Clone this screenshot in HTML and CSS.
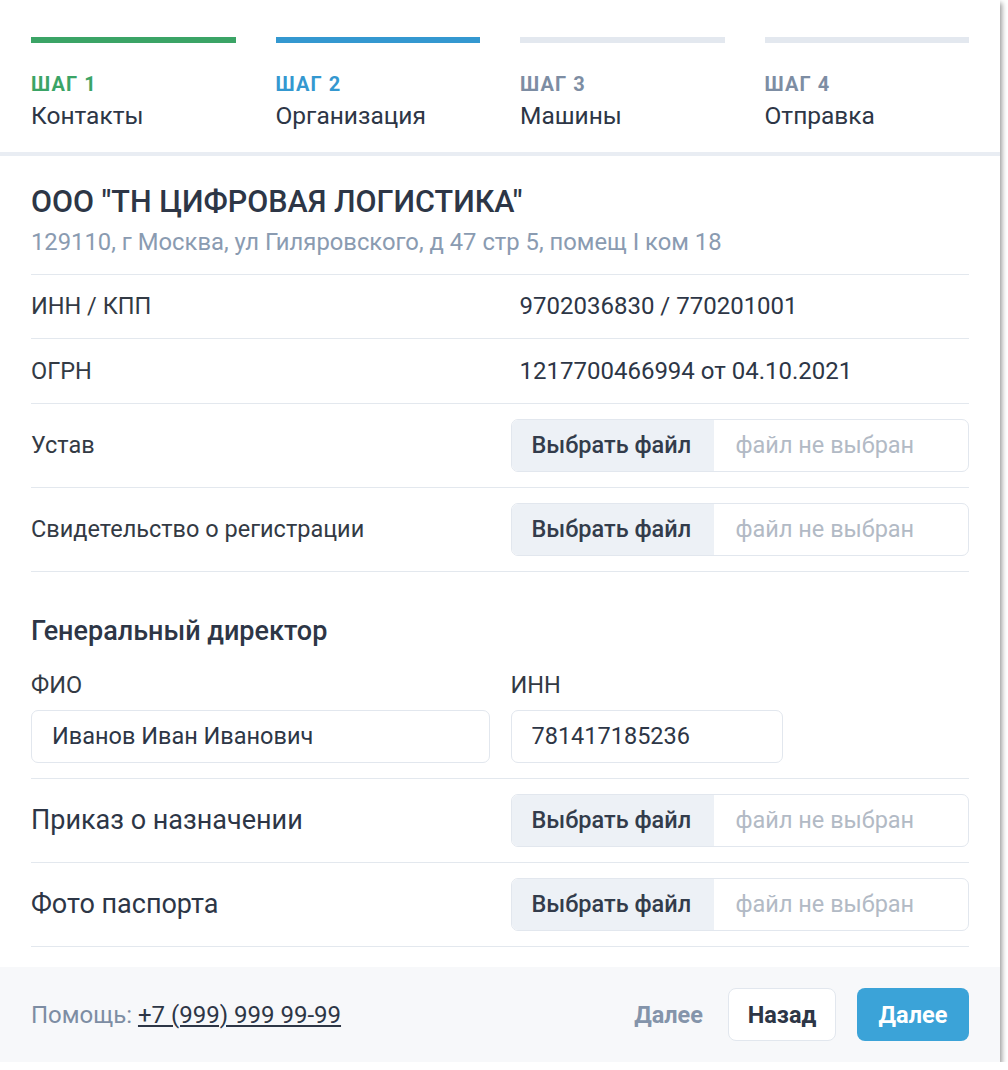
FILE: index.html
```html
<!DOCTYPE html>
<html lang="ru">
<head>
    <meta charset="utf-8">
    <title>Регистрация — Организация</title>
    <link rel="stylesheet" href="styles.css">
</head>
<body>
    <div class="card">
        <div class="steps">
            <div class="step done">
                <div class="step-bar"></div>
                <div class="step-num">Шаг 1</div>
                <div class="step-name">Контакты</div>
            </div>
            <div class="step active">
                <div class="step-bar"></div>
                <div class="step-num">Шаг 2</div>
                <div class="step-name">Организация</div>
            </div>
            <div class="step">
                <div class="step-bar"></div>
                <div class="step-num">Шаг 3</div>
                <div class="step-name">Машины</div>
            </div>
            <div class="step">
                <div class="step-bar"></div>
                <div class="step-num">Шаг 4</div>
                <div class="step-name">Отправка</div>
            </div>
        </div>

        <div class="content">
            <div class="org-head">
                <h1>ООО "ТН ЦИФРОВАЯ ЛОГИСТИКА"</h1>
                <div class="address">129110, г Москва, ул Гиляровского, д 47 стр 5, помещ I ком 18</div>
            </div>

            <div class="row">
                <div class="row-label">ИНН / КПП</div>
                <div class="row-value">9702036830 / 770201001</div>
            </div>
            <div class="row">
                <div class="row-label">ОГРН</div>
                <div class="row-value">1217700466994 от 04.10.2021</div>
            </div>
            <div class="row row-file">
                <div class="row-label">Устав</div>
                <label class="file-input">
                    <span class="file-btn">Выбрать файл</span>
                    <span class="file-name">файл не выбран</span>
                </label>
            </div>
            <div class="row row-file">
                <div class="row-label">Свидетельство о регистрации</div>
                <label class="file-input">
                    <span class="file-btn">Выбрать файл</span>
                    <span class="file-name">файл не выбран</span>
                </label>
            </div>

            <h2>Генеральный директор</h2>
            <div class="row row-fields">
                <div class="field">
                    <label for="fio">ФИО</label>
                    <input type="text" id="fio" value="Иванов Иван Иванович">
                </div>
                <div class="field">
                    <label for="inn">ИНН</label>
                    <input type="text" id="inn" class="input-short" value="781417185236">
                </div>
            </div>
            <div class="row row-file">
                <div class="row-label big">Приказ о назначении</div>
                <label class="file-input">
                    <span class="file-btn">Выбрать файл</span>
                    <span class="file-name">файл не выбран</span>
                </label>
            </div>
            <div class="row row-file">
                <div class="row-label big">Фото паспорта</div>
                <label class="file-input">
                    <span class="file-btn">Выбрать файл</span>
                    <span class="file-name">файл не выбран</span>
                </label>
            </div>
        </div>

        <div class="footer">
            <div class="help">Помощь: <a href="#">+7 (999) 999 99-99</a></div>
            <div class="actions">
                <a href="#" class="link-next">Далее</a>
                <button type="button" class="btn btn-back">Назад</button>
                <button type="button" class="btn btn-next">Далее</button>
            </div>
        </div>
    </div>
</body>
</html>
```

FILE: styles.css
```css
body {
    margin: 0;
    background-color: #fff;
    font-family: Roboto, "Noto Sans", Arial, sans-serif;
    color: #2d3646;
}

.card {
    width: 1000px;
    height: 1062px;
    background-color: #fff;
    box-shadow: 2px 3px 5px rgba(0, 0, 0, 0.4);
    display: flex;
    flex-direction: column;
}

/* steps */
.steps {
    display: grid;
    grid-template-columns: repeat(4, 1fr);
    gap: 40px;
    padding: 37px 31px 21px;
    border-bottom: 4px solid #e9edf3;
}

.step-bar {
    height: 6px;
    background-color: #e3e8ef;
}

.step-num {
    margin-top: 29px;
    font-size: 20px;
    line-height: 24px;
    font-weight: 700;
    letter-spacing: 1.1px;
    text-transform: uppercase;
    color: #7d8da3;
}

.step-name {
    margin-top: 5px;
    font-size: 24.5px;
    line-height: 30px;
    color: #2d3646;
}

.step.done .step-bar { background-color: #3ba466; }
.step.done .step-num { color: #3ba466; }
.step.active .step-bar { background-color: #3498d0; }
.step.active .step-num { color: #3498d0; }

/* content */
.content {
    padding: 0 31px;
    flex: 1;
}

.org-head {
    padding: 28px 0 16.5px;
    border-bottom: 1px solid #e3e8ee;
}

h1 {
    margin: 0;
    font-size: 30.5px;
    line-height: 36px;
    font-weight: 500;
    color: #2d3646;
}

.address {
    margin-top: 7px;
    font-size: 23.8px;
    line-height: 30px;
    color: #8a9bb1;
}

.row {
    display: grid;
    grid-template-columns: 1fr 1fr;
    gap: 21px;
    align-items: center;
    min-height: 63.5px;
    border-bottom: 1px solid #e3e8ee;
}

.row-file {
    padding: 15px 0;
    min-height: 0;
}

.row-label {
    font-size: 23.5px;
    color: #333a44;
}

.row-label.big {
    font-size: 27px;
    color: #2d3646;
}

.row-value {
    padding-left: 9px;
    font-size: 24px;
    color: #2d3646;
}

.file-input {
    display: flex;
    height: 53px;
    box-sizing: border-box;
    border: 1px solid #e2e7ee;
    border-radius: 7px;
    overflow: hidden;
    font-size: 23.5px;
    cursor: pointer;
}

.file-btn {
    width: 202px;
    display: flex;
    align-items: center;
    padding-left: 20px;
    box-sizing: border-box;
    background-color: #edf1f6;
    font-weight: 500;
    color: #333c4b;
}

.file-name {
    display: flex;
    align-items: center;
    padding-left: 22px;
    color: #b2bac5;
}

h2 {
    margin: 43px 0 0;
    font-size: 27px;
    line-height: 32px;
    font-weight: 500;
    color: #2d3646;
}

.row-fields {
    align-items: start;
    padding: 24px 0 15px;
}

.field label {
    display: block;
    font-size: 23.5px;
    line-height: 28px;
    color: #333a44;
}

.field input {
    display: block;
    width: 100%;
    height: 53px;
    margin-top: 11px;
    padding: 0 20px;
    box-sizing: border-box;
    border: 1px solid #e2e7ee;
    border-radius: 7px;
    font-family: inherit;
    font-size: 23.5px;
    color: #2d3646;
    outline: none;
}

.field input.input-short {
    width: 272px;
}

/* footer */
.footer {
    margin-top: 20px;
    height: 95px;
    display: flex;
    align-items: center;
    justify-content: space-between;
    padding: 0 31px;
    background-color: #f7f8fa;
}

.help {
    font-size: 24px;
    color: #7d8da3;
}

.help a {
    color: #2d3646;
}

.actions {
    display: flex;
    align-items: center;
}

.link-next {
    margin-right: 25px;
    font-size: 23.5px;
    font-weight: 700;
    color: #8494aa;
    text-decoration: none;
}

.btn {
    height: 53px;
    border-radius: 8px;
    font-family: inherit;
    font-size: 23.5px;
    font-weight: 700;
    cursor: pointer;
}

.btn-back {
    width: 108px;
    border: 1px solid #e2e7ee;
    background-color: #fff;
    color: #2d3646;
}

.btn-next {
    width: 112px;
    margin-left: 21px;
    border: none;
    background-color: #3ba3d8;
    color: #fff;
}
```
